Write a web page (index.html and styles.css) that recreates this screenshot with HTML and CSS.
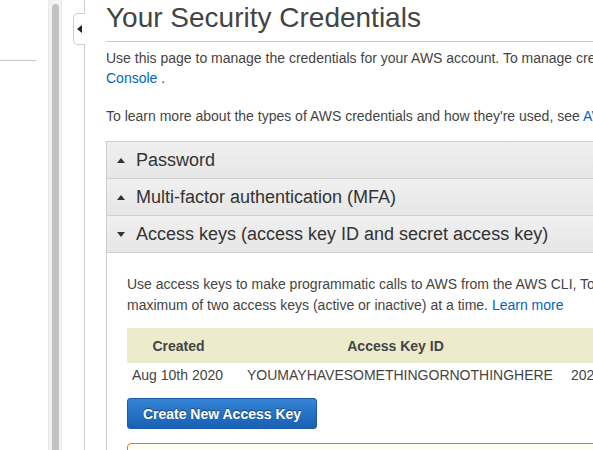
FILE: index.html
```html
<!DOCTYPE html>
<html>
<head>
<meta charset="utf-8">
<link rel="stylesheet" href="styles.css">
</head>
<body>
<div class="app">
  <aside class="nav"><div class="nav-rule"></div></aside>
  <div class="scrollbar"><div class="thumb"></div></div>
  <div class="gutter"></div>
  <div class="divider">
    <div class="tab"><span class="tab-arrow"></span></div>
  </div>
  <main class="main">
    <h1 class="title">Your Security Credentials</h1>
    <p class="intro">Use this page to manage the credentials for your AWS account. To manage credentials for AWS Identity and Access Management (IAM) users, use the IAM<br><a href="#">Console</a> .</p>
    <p class="intro learn">To learn more about the types of AWS credentials and how they're used, see <a href="#">AWS Security Credentials</a> in AWS General Reference.</p>

    <div class="accordion">
      <div class="acc-head"><span class="caret up"></span>Password</div>
      <div class="acc-head"><span class="caret up"></span>Multi-factor authentication (MFA)</div>
      <div class="acc-head"><span class="caret down"></span>Access keys (access key ID and secret access key)</div>
      <div class="acc-body">
        <p class="keys-text">Use access keys to make programmatic calls to AWS from the AWS CLI, Tools for PowerShell, AWS SDKs, or direct AWS API calls. You can have a<br>maximum of two access keys (active or inactive) at a time. <a href="#">Learn more</a></p>
        <table class="keys">
          <colgroup><col class="c1"><col class="c2"><col class="c3"></colgroup>
          <thead>
            <tr><th>Created</th><th>Access Key ID</th><th>Last Used</th></tr>
          </thead>
          <tbody>
            <tr><td class="d1">Aug 10th 2020</td><td class="d2">YOUMAYHAVESOMETHINGORNOTHINGHERE</td><td class="d3">2020-08-10</td></tr>
          </tbody>
        </table>
        <button class="btn">Create New Access Key</button>
        <div class="notice"></div>
      </div>
    </div>
  </main>
</div>
</body>
</html>
```
FILE: styles.css
```css
html, body {
  margin: 0;
  padding: 0;
  background: #fff;
  overflow: hidden;
}
body {
  width: 593px;
  height: 450px;
  font-family: "Liberation Sans", Arial, sans-serif;
  color: #444;
}
.app {
  display: flex;
  height: 450px;
  width: 1000px;
  overflow: hidden;
}
.nav {
  width: 48px;
  flex: none;
  padding-top: 60px;
  box-sizing: border-box;
}
.nav-rule {
  width: 36px;
  height: 1px;
  background: #c8c8c8;
}
.scrollbar {
  width: 14px;
  flex: none;
  background: #f3f3f3;
  border-left: 1px solid #e9e9e9;
  border-right: 1px solid #ececec;
  box-sizing: border-box;
  padding: 4px 2px 0 3px;
}
.thumb {
  height: 460px;
  background: #c2c2c2;
  border-radius: 4px;
}
.gutter {
  width: 22px;
  flex: none;
}
.divider {
  width: 1px;
  flex: none;
  background: #cfcfcf;
  position: relative;
}
.tab {
  position: absolute;
  left: -11px;
  top: 13px;
  width: 11px;
  height: 30px;
  background: #fff;
  border: 1px solid #cfcfcf;
  border-right: none;
  border-radius: 5px 0 0 5px;
}
.tab-arrow {
  position: absolute;
  left: 3px;
  top: 11px;
  width: 0;
  height: 0;
  border-top: 4px solid transparent;
  border-bottom: 4px solid transparent;
  border-right: 5px solid #222;
}
.main {
  flex: none;
  width: 880px;
  padding-left: 21px;
}
.title {
  margin: 2px 0 0;
  font-size: 28px;
  line-height: 32px;
  font-weight: normal;
  color: #444;
  padding-bottom: 7px;
  border-bottom: 1px solid #ccc;
  white-space: nowrap;
}
.intro {
  margin: 6px 0 0;
  font-size: 14px;
  line-height: 20px;
  color: #444;
  white-space: nowrap;
}
.intro.learn {
  margin-top: 18px;
}
a {
  color: #0066c0;
  text-decoration: none;
}
.accordion {
  margin-top: 15px;
  border-left: 1px solid #ccc;
  border-top: 1px solid #d0d0d0;
}
.acc-head {
  height: 37px;
  box-sizing: border-box;
  border-bottom: 1px solid #d0d0d0;
  background: linear-gradient(#f0f0f0, #e6e6e6);
  font-size: 18px;
  line-height: 36px;
  color: #333;
  display: flex;
  align-items: center;
  padding-left: 10px;
  white-space: nowrap;
}
.caret {
  width: 0;
  height: 0;
  border-left: 4px solid transparent;
  border-right: 4px solid transparent;
  margin-right: 11px;
}
.caret.up {
  border-bottom: 5px solid #333;
}
.caret.down {
  border-top: 5px solid #333;
}
.acc-body {
  padding: 21px 0 20px 20px;
}
.keys-text {
  margin: 0;
  font-size: 14px;
  line-height: 21px;
  color: #444;
  white-space: nowrap;
}
.keys {
  margin-top: 12px;
  border-collapse: collapse;
  table-layout: fixed;
  width: 584px;
  font-size: 14px;
}
.c1 { width: 103px; }
.c2 { width: 331px; }
.c3 { width: 150px; }
.keys th {
  background: #ececcd;
  height: 35px;
  padding: 0;
  font-weight: bold;
  color: #444;
  text-align: center;
}
.keys td {
  height: 23px;
  padding: 0;
  color: #444;
  white-space: nowrap;
}
.keys td.d1 { padding-left: 5px; }
.keys td.d2 { padding-left: 17px; }
.keys td.d3 { padding-left: 10px; }
.btn {
  display: block;
  margin-top: 12px;
  width: 190px;
  height: 31px;
  padding: 0;
  font-family: "Liberation Sans", Arial, sans-serif;
  font-size: 14px;
  font-weight: bold;
  color: #fff;
  text-shadow: 0 -1px 1px rgba(0,0,0,0.45);
  background: linear-gradient(#3584d6, #1860b4);
  border: 1px solid #1a5aa6;
  border-radius: 3px;
}
.notice {
  margin-top: 14px;
  height: 40px;
  border: 1px solid #e47911;
  border-radius: 4px;
  background: #fffdf2;
}
```
